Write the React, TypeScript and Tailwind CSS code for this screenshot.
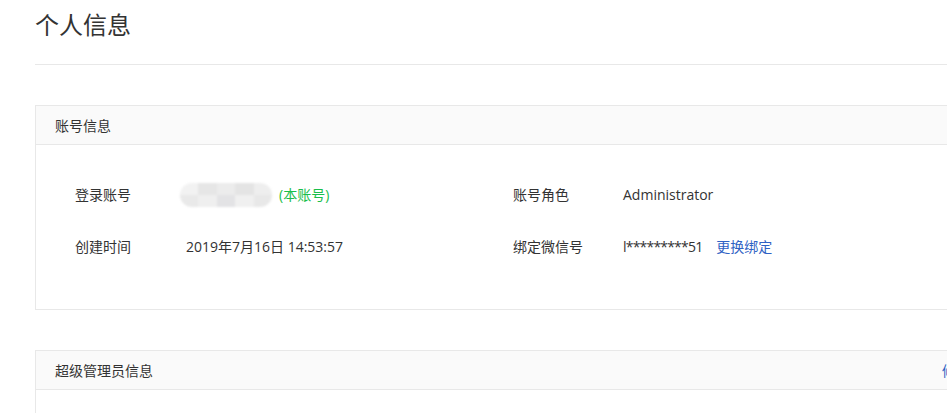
import React from "react";

const font = { fontFamily: '"Open Sans", "Noto Sans CJK SC", "Noto Sans", sans-serif' };

function Blurred() {
  const cells = ["#f2f2f2", "#e6e6e6", "#ececec", "#e4e4e4", "#eeeeee", "#e9e9e9", "#efefef", "#e3e3e5", "#f0f0f0", "#e8e8e8"];
  return (
    <div className="-ml-[6px] h-[24px] w-[92px] overflow-hidden rounded-[12px] blur-[1px]">
      <div className="grid h-full grid-cols-5 grid-rows-2">
        {cells.map((c, i) => (
          <div key={i} style={{ backgroundColor: c }} />
        ))}
      </div>
    </div>
  );
}

export default function App() {
  return (
    <div className="h-[413px] w-[947px] overflow-hidden bg-white text-[#333]" style={font}>
      <div className="w-[990px] pl-[35px]">
        <h1 className="pt-[7px] text-[24px] leading-[36px] font-normal text-[#333]">个人信息</h1>
        <div className="mt-[21px] h-px bg-[#e8e8e8]" />

        <div className="mt-[40px] border border-[#e8e8e8]">
          <div className="flex h-[39px] items-center border-b border-[#e8e8e8] bg-[#fafafa] px-[19px] text-[14px]">
            账号信息
          </div>
          <div className="pt-[40px] pb-[52px] pl-[39px] text-[14px] leading-[20px]">
            <div className="flex h-[20px] items-center">
              <div className="flex w-[438px] items-center">
                <div className="w-[111px]">登录账号</div>
                <Blurred />
                <span className="ml-[7px] text-[#19be4b]">(本账号)</span>
              </div>
              <div className="w-[110px]">账号角色</div>
              <div>Administrator</div>
            </div>
            <div className="mt-[32px] flex h-[20px] items-center">
              <div className="flex w-[438px] items-center">
                <div className="w-[111px]">创建时间</div>
                <div>2019年7月16日 14:53:57</div>
              </div>
              <div className="w-[110px]">绑定微信号</div>
              <div className="tracking-[-0.8px]">l*********51</div>
              <a className="ml-[14px] cursor-pointer text-[#2f62c4]">更换绑定</a>
            </div>
          </div>
        </div>

        <div className="mt-[40px] border border-[#e8e8e8]">
          <div className="flex h-[39px] items-center border-b border-[#e8e8e8] bg-[#fafafa] px-[19px] text-[14px]">
            <span>超级管理员信息</span>
            <a className="ml-auto cursor-pointer text-[#2f62c4]">修改</a>
          </div>
          <div className="h-[40px]" />
        </div>
      </div>
    </div>
  );
}
